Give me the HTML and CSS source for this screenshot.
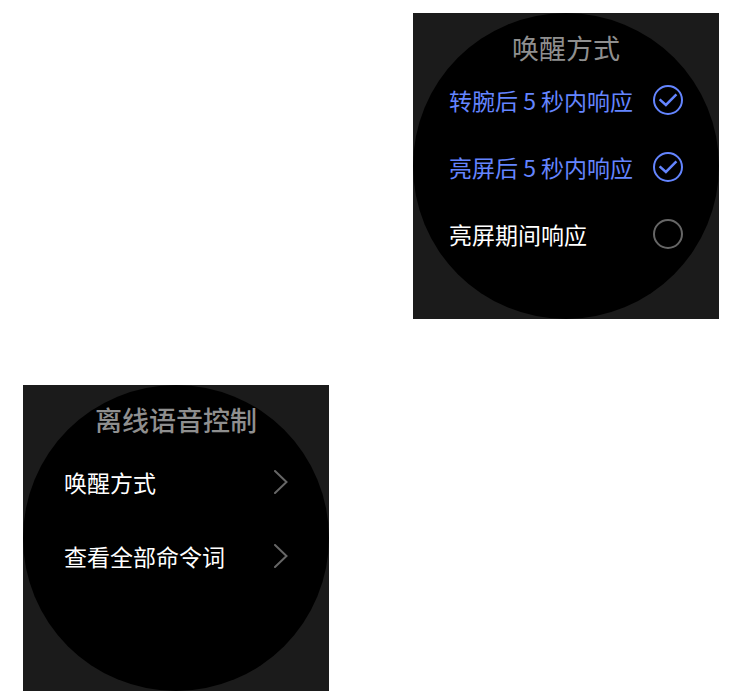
FILE: index.html
```html
<!DOCTYPE html>
<html lang="zh-CN">
<head>
    <meta charset="UTF-8">
    <meta name="viewport" content="width=device-width, initial-scale=1.0">
    <title>离线语音控制</title>
    <link rel="stylesheet" href="styles.css">
</head>
<body>
    <main class="screens">
        <section class="watch watch-right">
            <div class="dial">
                <h2 class="title">唤醒方式</h2>
                <form class="options">
                    <label class="option" for="wrist">
                        <span>转腕后 5 秒内响应</span>
                        <input type="checkbox" id="wrist" checked>
                    </label>
                    <label class="option" for="bright">
                        <span>亮屏后 5 秒内响应</span>
                        <input type="checkbox" id="bright" checked>
                    </label>
                    <label class="option" for="during">
                        <span>亮屏期间响应</span>
                        <input type="checkbox" id="during">
                    </label>
                </form>
            </div>
        </section>

        <section class="watch">
            <div class="dial">
                <h2 class="title title-main">离线语音控制</h2>
                <nav class="menu">
                    <a class="menu-item" href="#wake">
                        <span>唤醒方式</span>
                        <svg class="arrow" width="14" height="24" viewBox="0 0 14 24"><path d="M1 1l11.5 11L1 23"/></svg>
                    </a>
                    <a class="menu-item" href="#commands">
                        <span>查看全部命令词</span>
                        <svg class="arrow" width="14" height="24" viewBox="0 0 14 24"><path d="M1 1l11.5 11L1 23"/></svg>
                    </a>
                </nav>
            </div>
        </section>
    </main>
</body>
</html>
```
FILE: styles.css
```css
body {
    margin: 0;
    background-color: #fff;
    font-family: "Noto Sans CJK SC", sans-serif;
}

.screens {
    display: flex;
    flex-direction: column;
    gap: 66px;
    padding: 13px 13px 0 23px;
}

.watch {
    width: 306px;
    max-width: 100%;
    background-color: #1b1b1b;
}

.watch-right {
    align-self: flex-end;
}

/* round display inside the square case */
.dial {
    box-sizing: border-box;
    aspect-ratio: 1;
    padding-top: 17px;
    border-radius: 50%;
    background-color: #000;
}

.title {
    margin: 0;
    font-size: 27px;
    line-height: 36px;
    font-weight: 400;
    text-align: center;
    color: #8f8f8f;
}

.title-main {
    margin-bottom: 7px;
    font-weight: 500;
}

.option,
.menu-item {
    display: flex;
    align-items: center;
    justify-content: space-between;
    font-size: 23px;
    color: #fff;
    cursor: pointer;
}

.option {
    height: 67px;
    padding: 0 36px;
}

.option:has(input:checked) {
    color: #6485ff;
}

.option input {
    appearance: none;
    box-sizing: border-box;
    width: 30px;
    height: 30px;
    margin: 0;
    border: 2px solid #666;
    border-radius: 50%;
    cursor: pointer;
}

.option input:checked {
    border-color: #6485ff;
    background: url("data:image/svg+xml,%3Csvg xmlns='http://www.w3.org/2000/svg' viewBox='0 0 26 26'%3E%3Cpath d='M4.6 12.4l6.3 5.6L21.4 7.4' fill='none' stroke='%236485ff' stroke-width='2.5'/%3E%3C/svg%3E") center / 26px no-repeat;
}

.menu-item {
    height: 74px;
    padding: 0 41px;
    text-decoration: none;
}

.arrow {
    fill: none;
    stroke: #666;
    stroke-width: 2;
    stroke-linecap: round;
}
```
